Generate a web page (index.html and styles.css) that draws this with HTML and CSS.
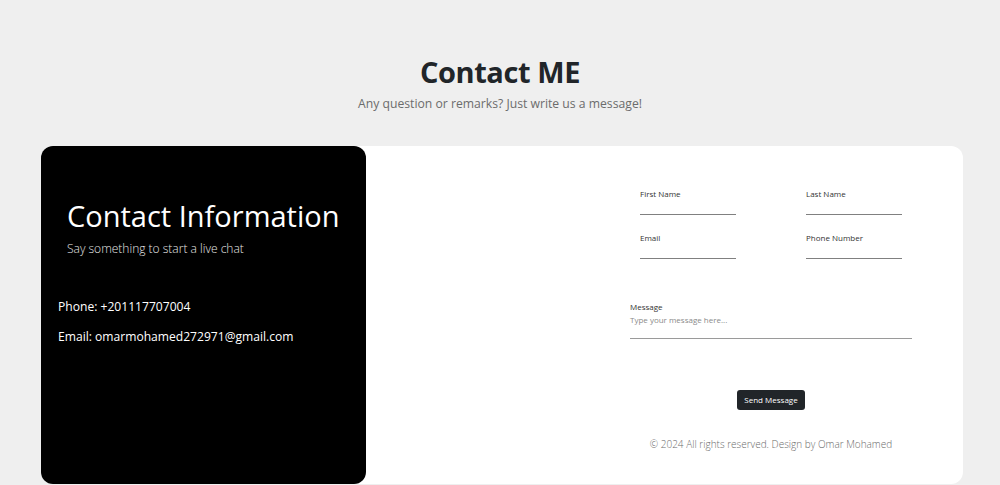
FILE: index.html
```html
<!DOCTYPE html>
<html lang="en">
<head>
<meta charset="utf-8">
<title>Contact ME</title>
<link rel="stylesheet" href="styles.css">
</head>
<body>
<section class="contact">
  <header class="contact-head">
    <h1 class="title">Contact ME</h1>
    <p class="subtitle">Any question or remarks? Just write us a message!</p>
  </header>
  <div class="card">
    <aside class="info">
      <h2 class="info-title">Contact Information</h2>
      <p class="info-sub">Say something to start a live chat</p>
      <p class="info-line">Phone: +201117707004</p>
      <p class="info-line">Email: omarmohamed272971@gmail.com</p>
    </aside>
    <div class="form-area">
      <form class="form">
        <div class="fields">
          <label class="field"><span class="label">First Name</span><span class="line"></span></label>
          <label class="field"><span class="label">Last Name</span><span class="line"></span></label>
          <label class="field"><span class="label">Email</span><span class="line"></span></label>
          <label class="field"><span class="label">Phone Number</span><span class="line"></span></label>
        </div>
        <label class="message">
          <span class="label">Message</span>
          <span class="placeholder">Type your message here...</span>
          <span class="line"></span>
        </label>
        <div class="actions"><button type="button" class="btn">Send Message</button></div>
        <p class="footer">© 2024 All rights reserved. Design by Omar Mohamed</p>
      </form>
    </div>
  </div>
</section>
</body>
</html>
```
FILE: styles.css
```css
* { box-sizing: border-box; }
html, body { margin: 0; padding: 0; }
body {
  background: #efefef;
  font-family: "Open Sans", "Noto Sans", sans-serif;
  color: #212529;
}
.contact { padding-top: 51px; }
.contact-head { text-align: center; }
.title {
  margin: 0;
  font-size: 29px;
  letter-spacing: -0.4px;
  font-weight: 700;
  line-height: 42px;
  color: #212529;
}
.subtitle {
  margin: 2px 0 0;
  font-size: 12.2px;
  line-height: 18px;
  color: #6c6c6c;
}
.card {
  margin: 33px 37px 0 41px;
  height: 338px;
  background: #fff;
  border-radius: 12px;
  display: flex;
}
.info {
  width: 325px;
  flex: none;
  background: #000;
  color: #fff;
  border-radius: 12px;
  padding: 52px 17px 0 17px;
}
.info-title {
  margin: 0 0 0 9px;
  font-size: 29px;
  font-weight: 400;
  line-height: 36px;
}
.info-sub {
  margin: 6px 0 0 9px;
  font-size: 12px;
  font-weight: 300;
  line-height: 17px;
  color: #e6e6e6;
}
.info-line {
  margin: 0;
  font-size: 12.1px;
  line-height: 18px;
}
.info-sub + .info-line { margin-top: 41px; }
.info-line + .info-line { margin-top: 12px; }
.form-area {
  flex: 1;
  padding: 42px 0 0 264px;
}
.form { width: 282px; }
.fields {
  padding-left: 10px;
  display: grid;
  grid-template-columns: 96px 96px;
  column-gap: 70px;
  row-gap: 17px;
}
.field, .message { display: flex; flex-direction: column; }
.label {
  font-size: 8px;
  line-height: 12px;
  color: #333;
}
.field .line { margin-top: 14px; height: 1px; background: #808080; }
.message { margin-top: 42px; }
.placeholder {
  margin-top: 1px;
  font-size: 8px;
  line-height: 12px;
  color: #8a8a8a;
}
.message .line { margin-top: 12px; height: 1px; background: #9a9a9a; }
.actions { margin-top: 51px; display: flex; justify-content: center; }
.btn {
  font-family: inherit;
  font-size: 8px;
  line-height: 12px;
  color: #fff;
  background: #212529;
  border: none;
  border-radius: 3px;
  padding: 4px 7px;
}
.footer {
  margin: 27px 0 0;
  text-align: center;
  font-size: 10px;
  font-weight: 300;
  line-height: 14px;
  color: #6c6c6c;
}
```
